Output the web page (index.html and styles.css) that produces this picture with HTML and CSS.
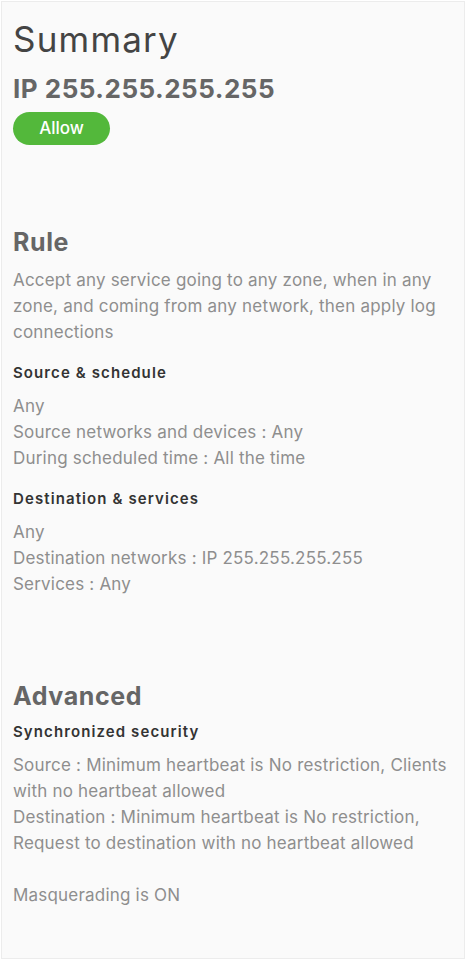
FILE: index.html
```html
<!DOCTYPE html>
<html lang="en">
<head>
  <meta charset="UTF-8" />
  <meta name="viewport" content="width=device-width, initial-scale=1.0"/>
  <title>Summary</title>
  <link rel="stylesheet" href="styles.css">
</head>
<body>
  <div class="panel">
    <h1 class="title">Summary</h1>
    <h2 class="target">IP 255.255.255.255</h2>
    <span class="badge">Allow</span>

    <section class="section rule">
      <h2 class="section-title">Rule</h2>
      <p class="text">Accept any service going to any zone, when in any zone, and coming from any network, then apply log connections</p>

      <h3 class="label">Source &amp; schedule</h3>
      <p class="text">Any<br>Source networks and devices : Any<br>During scheduled time : All the time</p>

      <h3 class="label">Destination &amp; services</h3>
      <p class="text">Any<br>Destination networks : IP 255.255.255.255<br>Services : Any</p>
    </section>

    <section class="section advanced">
      <h2 class="section-title">Advanced</h2>
      <h3 class="label">Synchronized security</h3>
      <p class="text">Source : Minimum heartbeat is No restriction, Clients with no heartbeat allowed<br>Destination : Minimum heartbeat is No restriction, Request to destination with no heartbeat allowed</p>
      <p class="text masq">Masquerading is ON</p>
    </section>
  </div>
</body>
</html>
```

FILE: styles.css
```css
html, body {
  height: 100%;
}

body {
  margin: 0;
  padding: 1px;
  box-sizing: border-box;
  background: #fff;
  font-family: Inter, sans-serif;
}

.panel {
  box-sizing: border-box;
  height: 100%;
  padding: 0 4px 0 11px;
  background: #fafafa;
  border: 1px solid #ececec;
}

.title {
  margin: 16px 0 0;
  font-size: 35px;
  line-height: 42px;
  font-weight: 400;
  letter-spacing: 1.2px;
  color: #444;
}

.target {
  margin: 14px 0 0;
  font-size: 26px;
  line-height: 30px;
  font-weight: 700;
  letter-spacing: 0.5px;
  color: #666;
}

.badge {
  display: inline-block;
  margin-top: 8px;
  width: 97px;
  height: 33px;
  line-height: 33px;
  border-radius: 17px;
  background: #53b83b;
  color: #fff;
  font-size: 17px;
  font-weight: 500;
  text-align: center;
}

.section-title {
  margin: 0;
  font-size: 25px;
  line-height: 30px;
  font-weight: 700;
  letter-spacing: 0.6px;
  color: #666;
}

.rule {
  margin-top: 82px;
}

.advanced {
  margin-top: 84px;
}

.text {
  margin: 10px 0 0;
  font-size: 17px;
  line-height: 26px;
  letter-spacing: 0.2px;
  color: #8e8e8e;
}

.label {
  margin: 18px 0 0;
  font-size: 15px;
  line-height: 20px;
  font-weight: 600;
  letter-spacing: 1.1px;
  color: #333;
}

.label + .text {
  margin-top: 10px;
}

.section-title + .label {
  margin-top: 11px;
}

.masq {
  margin-top: 26px;
}
```
